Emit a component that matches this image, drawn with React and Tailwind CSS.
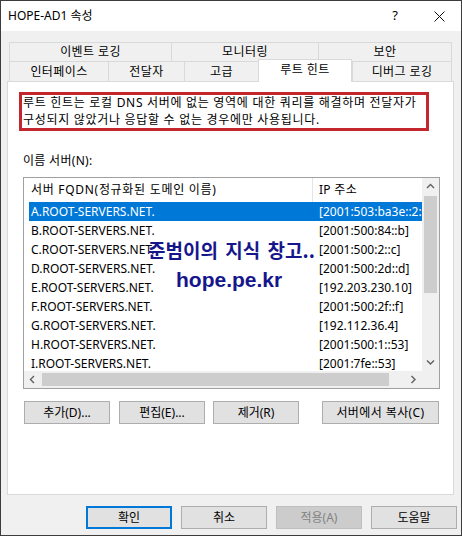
import React from "react";

const Chev = ({ dir }) => {
  if (dir === "up" || dir === "down") {
    const pts = dir === "up" ? "1,5 4.5,1.5 8,5" : "1,1.5 4.5,5 8,1.5";
    return (
      <svg width="9" height="7" viewBox="0 0 9 7">
        <polyline points={pts} fill="none" stroke="#606060" strokeWidth="1.4" />
      </svg>
    );
  }
  const pts = dir === "left" ? "5,1 1.5,4.5 5,8" : "1.5,1 5,4.5 1.5,8";
  return (
    <svg width="7" height="9" viewBox="0 0 7 9">
      <polyline points={pts} fill="none" stroke="#606060" strokeWidth="1.4" />
    </svg>
  );
};

const rows = [
  ["A.ROOT-SERVERS.NET.", "[2001:503:ba3e::2:30]"],
  ["B.ROOT-SERVERS.NET.", "[2001:500:84::b]"],
  ["C.ROOT-SERVERS.NET.", "[2001:500:2::c]"],
  ["D.ROOT-SERVERS.NET.", "[2001:500:2d::d]"],
  ["E.ROOT-SERVERS.NET.", "[192.203.230.10]"],
  ["F.ROOT-SERVERS.NET.", "[2001:500:2f::f]"],
  ["G.ROOT-SERVERS.NET.", "[192.112.36.4]"],
  ["H.ROOT-SERVERS.NET.", "[2001:500:1::53]"],
  ["I.ROOT-SERVERS.NET.", "[2001:7fe::53]"],
];

const Btn = ({ children, w = "w-[86px]", extra = "" }) => (
  <div
    className={`${w} h-[23px] flex items-center justify-center bg-[#e1e1e1] border border-[#adadad] ${extra}`}
  >
    {children}
  </div>
);

export default function App() {
  return (
    <div className="w-[462px] h-[536px] border border-[#3c3c3c] flex flex-col bg-[#f0f0f0] text-[12px] text-black font-['Noto_Sans','Noto_Sans_CJK_KR',sans-serif] overflow-hidden">
      {/* Title bar */}
      <div className="h-[30px] shrink-0 bg-white flex items-center">
        <div className="pl-[7px] text-[12px]">HOPE-AD1 속성</div>
        <div className="ml-auto flex h-full">
          <div className="w-[44px] h-full flex items-center justify-center text-[13px]">?</div>
          <div className="w-[44px] h-full flex items-center justify-center">
            <svg width="11" height="11" viewBox="0 0 11 11">
              <path d="M0.5 0.5 L10.5 10.5 M10.5 0.5 L0.5 10.5" stroke="#111" strokeWidth="1" />
            </svg>
          </div>
        </div>
      </div>

      {/* Body */}
      <div className="flex-1 flex flex-col">
        {/* Tabs */}
        <div className="pt-[11px] pl-[8px] flex flex-col tracking-[0.4px]">
          <div className="flex h-[19px]">
            <div className="w-[162px] h-full border-t border-l border-[#d9d9d9] flex items-center justify-center">이벤트 로깅</div>
            <div className="w-[147px] h-full border-t border-l border-[#d9d9d9] flex items-center justify-center">모니터링</div>
            <div className="w-[134px] h-full border-t border-l border-r border-[#d9d9d9] flex items-center justify-center">보안</div>
          </div>
          <div className="flex h-[20px] items-end">
            <div className="w-[99px] h-[20px] border-t border-l border-[#d9d9d9] flex items-center justify-center">인터페이스</div>
            <div className="w-[76px] h-[20px] border-t border-l border-[#d9d9d9] flex items-center justify-center">전달자</div>
            <div className="w-[74px] h-[20px] border-t border-l border-[#d9d9d9] flex items-center justify-center">고급</div>
            <div className="relative z-10 translate-y-px w-[94px] h-[23px] bg-white border-t border-l border-r border-[#d9d9d9] flex items-start justify-center pt-[1px]">루트 힌트</div>
            <div className="w-[100px] h-[20px] border-t border-l border-r border-[#d9d9d9] flex items-center justify-center">디버그 로깅</div>
          </div>
        </div>

        {/* Panel */}
        <div className="ml-[6px] w-[447px] h-[414px] border border-[#d9d9d9] bg-white flex flex-col">
          <div className="ml-[11px] mt-[10px] w-[410px] border-[3px] border-[#c4262e] pl-[1px] leading-[16.5px] whitespace-nowrap tracking-[0.7px]">
            <div>루트 힌트는 로컬 DNS 서버에 없는 영역에 대한 쿼리를 해결하며 전달자가</div>
            <div>구성되지 않았거나 응답할 수 없는 경우에만 사용됩니다.</div>
          </div>

          <div className="ml-[15px] mt-[22px] h-[16px] leading-[16px] tracking-[0.3px]">이름 서버(N):</div>

          {/* List */}
          <div className="relative ml-[15px] mt-[8px] w-[417px] h-[212px] border border-[#a0a0a0] bg-white flex">
            <div className="w-[398px] flex flex-col">
              <div className="h-[193px] overflow-hidden">
                <div className="h-[24px] flex items-stretch">
                  <div className="w-[288px] pl-[7px] flex items-center tracking-[0.7px]">서버 FQDN(정규화된 도메인 이름)</div>
                  <div className="w-px bg-[#e5e5e5]" />
                  <div className="pl-[6px] flex items-center tracking-[0.3px]">IP 주소</div>
                </div>
                {rows.map(([n, ip], i) => (
                  <div key={n} className="h-[19px] flex">
                    <div
                      className={`ml-[5px] flex-1 flex items-center leading-[19px] ${
                        i === 0 ? "bg-[#0078d7] text-white" : ""
                      }`}
                    >
                      <div className="w-[283px] pl-[2px] whitespace-nowrap">{n}</div>
                      <div className="flex-1 pl-[7px] whitespace-nowrap overflow-hidden">{ip}</div>
                    </div>
                  </div>
                ))}
              </div>
              {/* horizontal scrollbar */}
              <div className="h-[17px] bg-[#f0f0f0] flex">
                <div className="w-[17px] h-full flex items-center justify-center">
                  <Chev dir="left" />
                </div>
                <div className="flex-1 py-[2px] pl-[1px]">
                  <div className="w-[347px] h-full bg-[#cdcdcd]" />
                </div>
                <div className="w-[17px] h-full flex items-center justify-center">
                  <Chev dir="right" />
                </div>
              </div>
            </div>
            {/* vertical scrollbar */}
            <div className="w-[17px] flex flex-col bg-[#f0f0f0]">
              <div className="h-[193px] flex flex-col">
                <div className="h-[17px] flex items-center justify-center">
                  <Chev dir="up" />
                </div>
                <div className="flex-1 px-[2px] pt-[1px]">
                  <div className="h-[97px] bg-[#cdcdcd]" />
                </div>
                <div className="h-[17px] flex items-center justify-center">
                  <Chev dir="down" />
                </div>
              </div>
              <div className="h-[17px]" />
            </div>

            {/* watermark */}
            <div className="absolute left-[124px] top-[61px] h-[22px] leading-[22px] text-[19px] font-bold text-[#16168c] whitespace-nowrap [word-spacing:3px] font-['Noto_Sans_CJK_KR',sans-serif]">
              준범이의 지식 창고..
            </div>
            <div className="absolute left-[152px] top-[90px] h-[24px] leading-[24px] text-[21px] font-bold text-[#16168c] whitespace-nowrap font-['Liberation_Sans',Arial,sans-serif]">
              hope.pe.kr
            </div>
          </div>

          {/* buttons */}
          <div className="mt-[12px] ml-[16px] flex">
            <Btn>추가(D)...</Btn>
            <Btn extra="ml-[9px]">편집(E)...</Btn>
            <Btn extra="ml-[8px]">제거(R)</Btn>
            <Btn w="w-[117px]" extra="ml-[23px] tracking-[0.4px]">서버에서 복사(C)</Btn>
          </div>
        </div>

        {/* bottom buttons */}
        <div className="mt-[11px] flex justify-end gap-[9px] pr-[4px]">
          <div className="w-[86px] h-[23px] flex items-center justify-center bg-[#e1e1e1] border-2 border-[#0078d7]">확인</div>
          <Btn>취소</Btn>
          <div className="w-[86px] h-[23px] flex items-center justify-center bg-[#cccccc] border border-[#bfbfbf] text-[#838383]">적용(A)</div>
          <Btn>도움말</Btn>
        </div>
      </div>
    </div>
  );
}
